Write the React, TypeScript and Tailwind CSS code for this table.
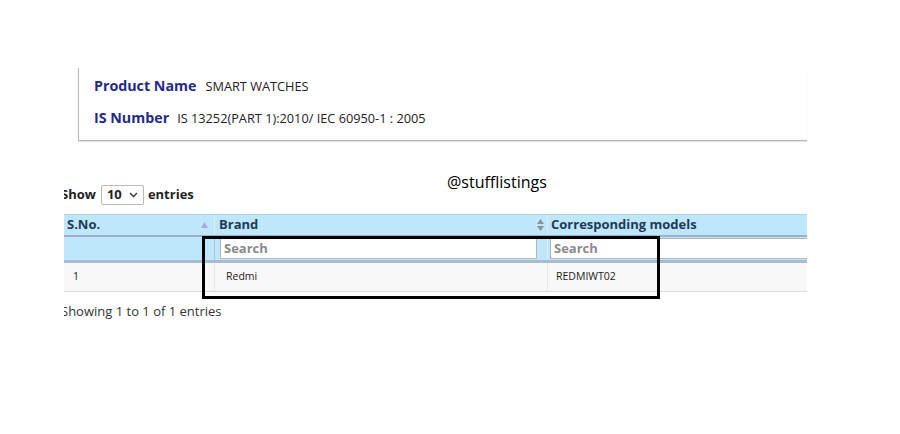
import React from "react";

const rows = [{ sno: "1", brand: "Redmi", models: "REDMIWT02" }];

const SortUp = () => (
  <svg width="7" height="6" viewBox="0 0 7 6" className="shrink-0">
    <path d="M3.5 0 L7 6 L0 6 Z" fill="#a7a7e8" />
  </svg>
);

const SortBoth = () => (
  <svg width="7" height="12" viewBox="0 0 7 12" className="shrink-0">
    <path d="M3.5 0 L7 5 L0 5 Z" fill="#8c9499" />
    <path d="M3.5 12 L7 7 L0 7 Z" fill="#8c9499" />
  </svg>
);

export default function App() {
  return (
    <div
      className="relative w-[900px] h-[434px] bg-white overflow-hidden text-[#222]"
      style={{ fontFamily: '"Open Sans", "Liberation Sans", sans-serif' }}
    >
      {/* Product info */}
      <div className="ml-[78px] mt-[68px] w-[729px] h-[73px] border-l border-b border-[#b4b4b4] pl-[15px] pt-[7px] shadow-[0_1px_1px_rgba(0,0,0,0.1)]">
        <div className="flex items-baseline h-[20px]">
          <span className="text-[14.25px] font-bold text-[#1f2a8a]">Product Name</span>
          <span className="ml-[9px] text-[12.75px] text-[#222]">SMART WATCHES</span>
        </div>
        <div className="flex items-baseline h-[20px] mt-[12px]">
          <span className="text-[14.25px] font-bold text-[#1f2a8a]">IS Number</span>
          <span className="ml-[8px] text-[12.75px] text-[#222]">IS 13252(PART 1):2010/ IEC 60950-1 : 2005</span>
        </div>
      </div>

      {/* Table area */}
      <div className="ml-[64px] w-[743px] overflow-hidden">
        <div className="relative h-[39px] mt-[29px]">
          <div className="absolute left-[383px] top-0 text-[16px] text-black leading-[24px]">@stufflistings</div>
          <div className="absolute left-[-3px] top-[15px] flex items-center text-[13px] font-bold text-[#222]">
            <span>Show</span>
            <div className="ml-[5px] mr-[4px] flex items-center w-[43px] h-[20px] border border-[#b8b8b8] rounded-[2px] px-[5px] bg-white">
              <span className="font-bold">10</span>
              <svg width="9" height="6" viewBox="0 0 9 6" className="ml-auto">
                <path d="M1 1 L4.5 4.5 L8 1" stroke="#333" strokeWidth="1.3" fill="none" />
              </svg>
            </div>
            <span>entries</span>
          </div>
        </div>

        <div className="mt-[5px] w-[743px]">
          {/* header */}
          <div className="grid grid-cols-[150px_333px_260px] h-[23px] bg-[#bee7fc] border-t border-[#a9d6ee] border-b-2 border-b-[#9fb1c6]">
            <div className="flex items-center justify-between pl-[3px] pr-[6px] text-[13px] font-bold text-[#1e3a56]">
              <span>S.No.</span>
              <SortUp />
            </div>
            <div className="flex items-center justify-between pl-[4px] pr-[3px] border-l border-[#d8eefa] text-[13px] font-bold text-[#1e3a56]">
              <span>Brand</span>
              <SortBoth />
            </div>
            <div className="flex items-center pl-[3px] border-l border-[#d8eefa] text-[13px] font-bold text-[#1e3a56]">
              <span>Corresponding models</span>
            </div>
          </div>

          {/* filter row */}
          <div className="grid grid-cols-[150px_333px_260px] h-[26px] bg-[#bee7fc] border-b-[3px] border-b-[#a9bccf]">
            <div />
            <div className="flex items-center pl-[5px] pr-[10px] border-l border-[#a9c7d8]">
              <div className="w-full h-[21px] bg-white border border-[#b5b5b5] pl-[3px] flex items-center text-[13px] font-bold text-[#8a8a8a]">
                Search
              </div>
            </div>
            <div className="flex items-center pl-[2px] border-l border-[#d8eefa]">
              <div className="w-full h-[21px] bg-white border border-[#b5b5b5] border-r-0 pl-[3px] flex items-center text-[13px] font-bold text-[#8a8a8a]">
                Search
              </div>
            </div>
          </div>

          {/* body */}
          {rows.map((r, i) => (
            <div
              key={i}
              className="grid grid-cols-[150px_333px_260px] h-[29px] bg-[#f8f8f8] border-b border-[#dcdcdc] text-[10.5px] text-[#222]"
            >
              <div className="flex items-center pl-[9px]">{r.sno}</div>
              <div className="flex items-center pl-[11px] border-l border-[#e6e6e6]">{r.brand}</div>
              <div className="flex items-center pl-[8px] border-l border-[#e6e6e6]">{r.models}</div>
            </div>
          ))}
        </div>

        <div className="mt-[9px] ml-[-3px] text-[13px] leading-[20px] text-[#333]">Showing 1 to 1 of 1 entries</div>
      </div>

      {/* highlight box */}
      <div className="absolute left-[202px] top-[236px] w-[458px] h-[63px] border-[3px] border-black" />
    </div>
  );
}
